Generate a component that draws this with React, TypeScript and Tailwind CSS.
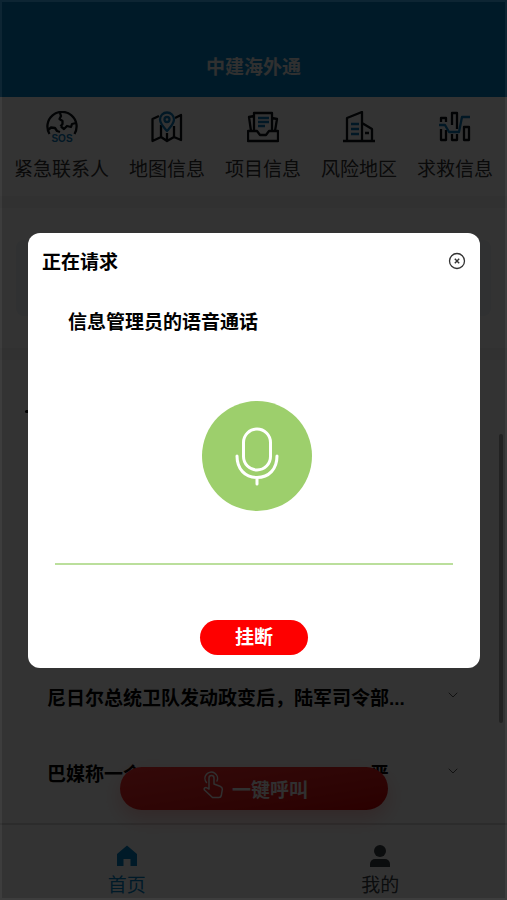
import type { ReactNode } from "react";
import { ChevronDown } from "lucide-react";

const INK = "#0c1116";
const BLUE = "#0a78b8";

function IconFrame({ children }: { children: ReactNode }) {
  return (
    <svg
      viewBox="0 0 32 32"
      className="size-8"
      fill="none"
      stroke={INK}
      strokeWidth="2.300"
      strokeLinejoin="round"
      aria-hidden="true"
    >
      {children}
    </svg>
  );
}

function SosIcon() {
  return (
    <IconFrame>
      <path d="M3.500 23A14.600 14.600 0 1 1 28.500 23" />
      <path d="M14 2l1 3-1.500 3 3 2v3l-2 2.500M2 19l3-2.500 4 .5 2 3 3 1M30 12l-4 1-1 3-4-1-3 3-3-2.500" />
      <text
        x="16"
        y="31"
        textAnchor="middle"
        fill={BLUE}
        stroke="none"
        className="font-['Liberation_Sans'] text-[10px] font-bold"
      >
        SOS
      </text>
    </IconFrame>
  );
}

function MapIcon() {
  return (
    <IconFrame>
      <path d="M8 5L1.500 8v22L10 26l6 4 7-4 7 3V4l-6 3M10 14v12M23 15v11M16 22v8" />
      <path
        stroke={BLUE}
        d="M16 20c-4-4.500-7-7.500-7-11.500a7 7 0 0 1 14 0c0 4-3 7-7 11.500z"
      />
      <circle cx="16" cy="8.500" r="2.500" stroke={BLUE} />
    </IconFrame>
  );
}

function ProjectIcon() {
  return (
    <IconFrame>
      <path d="M7 20V2h18v18M7 5l-5 1 2 14M25 7l5 1-2 12" />
      <path d="M1 20h9l3 4h6l3-4h9v10H1z" />
      <path stroke={BLUE} d="M11 7h11M11 11h11M11 15h7" />
    </IconFrame>
  );
}

function BuildingIcon() {
  return (
    <IconFrame>
      <path d="M0 30h32M4 30V7l15-6v29M19 12l10 6v12M22 22h4" />
      <path stroke={BLUE} d="M8 13h8M8 18h8M8 23h8" />
    </IconFrame>
  );
}

function RescueIcon() {
  return (
    <IconFrame>
      <path d="M2 11V7h5v4M2 18v11h5V19M13 14V2h5v16M13 23v6h5v-6M25 16h5v13h-5z" />
      <path stroke={BLUE} d="M0 14h6l4 7h10l3-15h8" />
    </IconFrame>
  );
}

function TapIcon() {
  return (
    <svg
      viewBox="0 0 21 28"
      className="mt-1 h-7 w-[21px]"
      fill="none"
      stroke="currentColor"
      strokeWidth="1.500"
      strokeLinecap="round"
      strokeLinejoin="round"
      aria-hidden="true"
    >
      <path d="M3.500 11.500A6.300 6.300 0 1 1 14 10" />
      <path d="M6 18V7a2.500 2.500 0 0 1 5 0v6l6 2.200c1.800.7 2.500 1.600 2.300 3.300l-1 6c-.3 1.500-1 2-2.300 2H9.500L1.500 19c-1-1.700 1-3.200 2.500-2.200z" />
    </svg>
  );
}

const shortcuts = [
  { label: "紧急联系人", icon: <SosIcon /> },
  { label: "地图信息", icon: <MapIcon /> },
  { label: "项目信息", icon: <ProjectIcon /> },
  { label: "风险地区", icon: <BuildingIcon /> },
  { label: "求救信息", icon: <RescueIcon /> },
];

const news = [
  { start: "尼日尔总统卫队发动政变后，陆军司令部...", end: "" },
  { start: "巴媒称一个", end: "严" },
];

function CallDialog() {
  return (
    <div className="fixed inset-0 z-20 flex items-center border-2 border-white/5 bg-black/80 pr-[25px] pl-[26px]">
      <section
        role="dialog"
        aria-modal="true"
        aria-labelledby="call-title"
        className="flex w-full flex-col rounded-xl bg-white px-[14px] pt-[14px] pb-[13px] text-black"
      >
        <div className="flex h-7 items-center justify-between">
          <h2 id="call-title" className="pt-1 text-[19px] font-bold">
            正在请求
          </h2>
          <button type="button" aria-label="关闭">
            <svg viewBox="0 0 18 18" className="size-[18px]" fill="none" stroke="#333">
              <circle cx="9" cy="9" r="7.500" strokeWidth="1.300" />
              <path d="M6.800 6.800l4.400 4.400M11.200 6.800l-4.400 4.400" strokeWidth="1.400" />
            </svg>
          </button>
        </div>
        <p className="mt-[34px] px-[26px] text-[19px] leading-7 font-bold">
          信息管理员的语音通话
        </p>
        <div className="mx-[13px] mt-16 flex justify-center border-b-2 border-[#bbdf9c] pb-[52px] pl-1.5">
          <div className="flex size-[110px] items-center justify-center rounded-full bg-[#9dcf6c]">
            <svg
              viewBox="0 0 44 60"
              className="h-[60px] w-11"
              fill="none"
              stroke="#fff"
              strokeWidth="3"
              strokeLinecap="round"
              aria-hidden="true"
            >
              <rect x="8.500" y="3" width="27" height="41" rx="13.500" />
              <path d="M2 30c0 13 8 21.500 20 21.500S42 43 42 30M22 52v6" />
            </svg>
          </div>
        </div>
        <button
          type="button"
          className="mt-[55px] h-[35px] w-[108px] self-center rounded-full bg-[#fe0000] pt-0.5 text-[19px] font-bold text-white"
        >
          挂断
        </button>
      </section>
    </div>
  );
}

export default function App() {
  return (
    <div className="flex h-screen flex-col bg-white font-['Liberation_Sans','Noto_Sans_CJK_SC',sans-serif] text-[19px] leading-7">
      <header className="bg-[#0082c8] pt-[54px] pb-[15px] text-center text-[#eee]">
        <h1 className="font-bold">中建海外通</h1>
      </header>

      <nav className="flex justify-between px-[14px] pt-[14px] pb-3">
        {shortcuts.map((s) => (
          <a
            key={s.label}
            href="#"
            className="flex flex-col items-center gap-[13px] whitespace-nowrap text-[#333]"
          >
            {s.icon}
            {s.label}
          </a>
        ))}
      </nav>

      <main className="relative flex min-h-0 flex-1 flex-col">
        <div className="border-y-[12px] border-[#f2f2f2] px-4 py-8">
          <div className="h-[76px] rounded-lg bg-[#edf3f7]" />
        </div>
        <div className="px-[25px] pt-[50px]">
          <div className="h-[3px] w-10 rounded-full bg-black" />
        </div>
        <ul className="mt-auto pb-[14px] font-bold text-black">
          {news.map((item) => (
            <li
              key={item.start}
              className="flex h-[76px] items-center justify-between gap-4 pr-[46px] pl-[47px]"
            >
              <span className="flex flex-1 justify-between pt-2 pr-6 whitespace-nowrap">
                <span>{item.start}</span>
                {item.end && <span className="pr-4">{item.end}</span>}
              </span>
              <ChevronDown className="size-4 shrink-0 text-[#555]" strokeWidth={1.5} />
            </li>
          ))}
        </ul>
        <div className="absolute right-1 bottom-[100px] h-[289px] w-1 rounded-full bg-[#a8a8a8]" />
        <button
          type="button"
          className="absolute bottom-[13px] left-1/2 flex h-[43px] w-[268px] -translate-x-1/2 justify-center gap-2 rounded-full bg-linear-to-br from-[#ff3030] to-[#d00000] pl-1 font-bold text-[#eee] shadow-[0_8px_20px_rgba(255,60,60,0.3)]"
        >
          <TapIcon />
          <span className="pt-[10px]">一键呼叫</span>
        </button>
      </main>

      <footer className="flex border-t-2 border-[#dcdcdc] pt-[19px]">
        <a href="#" className="flex flex-1 flex-col items-center gap-1 text-[#0082c8]">
          <svg viewBox="0 0 24 24" className="size-6" fill="currentColor" aria-hidden="true">
            <path d="M12 1.500L22 10v12h-6.500v-7h-7v7H2V10z" />
          </svg>
          首页
        </a>
        <a href="#" className="flex flex-1 flex-col items-center gap-1 text-[#3a4046]">
          <svg viewBox="0 0 24 24" className="size-6" fill="currentColor" aria-hidden="true">
            <circle cx="12" cy="7" r="6" />
            <path d="M2 23v-3a5 5 0 0 1 5-5h10a5 5 0 0 1 5 5v3z" />
          </svg>
          我的
        </a>
      </footer>

      <CallDialog />
    </div>
  );
}
